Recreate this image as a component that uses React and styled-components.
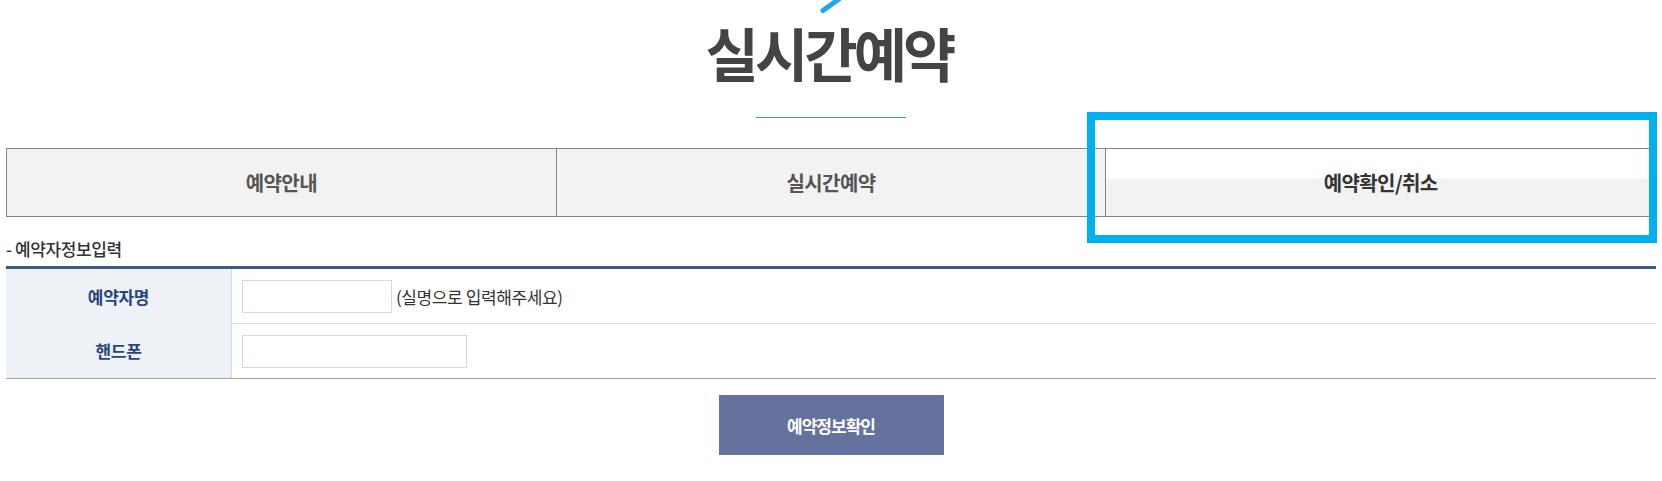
import React from 'react';
import styled, { createGlobalStyle } from 'styled-components';

const Global = createGlobalStyle`
  html, body { margin: 0; padding: 0; background: #fff; }
  body { font-family: "Noto Sans CJK KR", "Noto Sans", sans-serif; color: #333; }
  * { box-sizing: border-box; }
`;

const Page = styled.div`
  width: 1662px;
  padding: 0 6px;
`;

const Header = styled.header`
  display: flex;
  flex-direction: column;
  align-items: center;
`;

const Deco = styled.svg`
  display: block;
  width: 24px;
  height: 14px;
`;

const Title = styled.h1`
  margin: 9px 0 0;
  font-size: 58px;
  font-weight: 700;
  line-height: 1;
  letter-spacing: -4px;
  padding-right: 4px;
  color: #444;
`;

const TitleRule = styled.span`
  display: block;
  width: 150px;
  height: 1px;
  margin-top: 36px;
  background: #3a92e0;
`;

const Tabs = styled.nav`
  display: flex;
  margin-top: 30px;
  border: 1px solid #858585;
`;

const Tab = styled.a`
  position: relative;
  flex: 1;
  height: 67px;
  display: flex;
  align-items: center;
  justify-content: center;
  font-size: 20px;
  font-weight: 700;
  letter-spacing: -0.6px;
  text-decoration: none;
  color: ${p => (p.$active ? '#333' : '#555')};
  background: ${p =>
    p.$active
      ? 'linear-gradient(to bottom, #fff 0, #fff 30px, #f2f2f2 30px)'
      : '#f2f2f2'};
  & + & { border-left: 1px solid #858585; }
`;

const Highlight = styled.span`
  position: absolute;
  top: -37px;
  left: -19px;
  right: -2px;
  bottom: -27px;
  border: 8px solid #00b0f0;
  pointer-events: none;
`;

const SectionTitle = styled.h2`
  margin: 21px 0 7px;
  font-size: 17px;
  font-weight: 500;
  line-height: 21px;
  letter-spacing: -0.4px;
  color: #333;
`;

const FormTable = styled.div`
  display: grid;
  grid-template-columns: 226px 1fr;
  grid-template-rows: 54px 55px;
  border-top: 3px solid #3a5a8c;
  border-bottom: 1px solid #a6a6a6;
`;

const Label = styled.div`
  display: flex;
  align-items: center;
  justify-content: center;
  background: #eef2f7;
  border-right: 1px solid #cfdbe9;
  font-size: 17px;
  font-weight: 700;
  letter-spacing: -0.3px;
  color: #27467f;
`;

const Field = styled.div`
  display: flex;
  align-items: center;
  gap: 4px;
  padding-left: 10px;
  border-top: ${p => (p.$divided ? '1px solid #ddd' : 'none')};
`;

const TextInput = styled.input`
  width: ${p => p.$w}px;
  height: 33px;
  border: 1px solid #ddd6d6;
  background: #fff;
  padding: 0 6px;
  font: inherit;
  outline: none;
`;

const Hint = styled.span`
  font-size: 17px;
  letter-spacing: -0.4px;
  color: #333;
`;

const Actions = styled.div`
  display: flex;
  justify-content: center;
  margin-top: 16px;
`;

const SubmitButton = styled.button`
  width: 225px;
  height: 60px;
  border: none;
  background: #66729e;
  color: #fff;
  font-family: inherit;
  font-size: 17px;
  font-weight: 700;
  letter-spacing: -1px;
  cursor: pointer;
`;

export default function App() {
  return (
    <>
      <Global />
      <Page>
        <Header>
          <Deco viewBox="0 0 24 14">
            <line x1="4" y1="10.5" x2="20" y2="-1" stroke="#1ea5ee" strokeWidth="5" strokeLinecap="round" />
          </Deco>
          <Title>실시간예약</Title>
          <TitleRule />
        </Header>

        <Tabs>
          <Tab href="#">예약안내</Tab>
          <Tab href="#">실시간예약</Tab>
          <Tab href="#" $active>
            예약확인/취소
            <Highlight />
          </Tab>
        </Tabs>

        <SectionTitle>- 예약자정보입력</SectionTitle>

        <FormTable>
          <Label>예약자명</Label>
          <Field>
            <TextInput $w={150} type="text" />
            <Hint>(실명으로 입력해주세요)</Hint>
          </Field>
          <Label>핸드폰</Label>
          <Field $divided>
            <TextInput $w={225} type="text" />
          </Field>
        </FormTable>

        <Actions>
          <SubmitButton type="button">예약정보확인</SubmitButton>
        </Actions>
      </Page>
    </>
  );
}
